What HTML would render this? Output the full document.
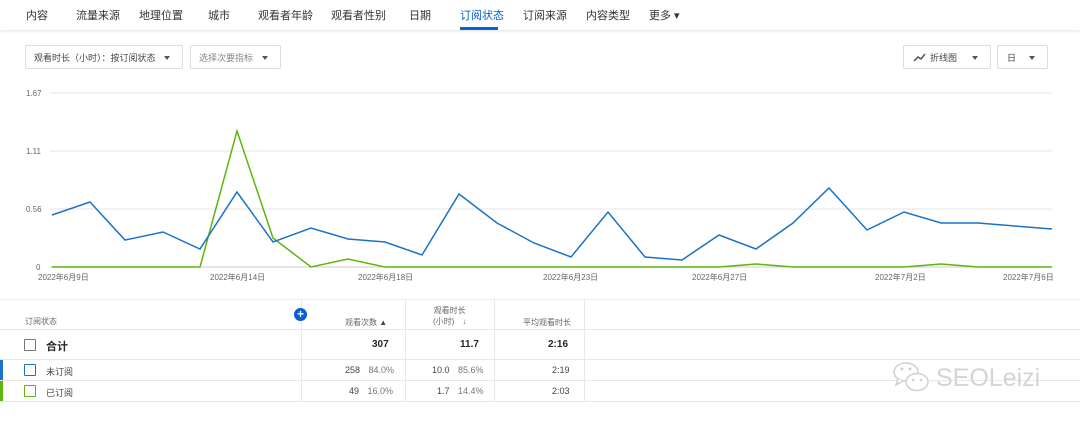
<!DOCTYPE html>
<html><head><meta charset="utf-8"><style>
body{margin:0;width:1080px;height:424px;background:#fff;font-family:"Liberation Sans","Noto Sans CJK SC",sans-serif;position:relative;overflow:hidden;color:#282828}
.nav{position:absolute;top:0;left:0;width:1080px;height:30px;box-shadow:0 1px 3px rgba(0,0,0,.12);background:#fff}
.nav span{position:absolute;top:7px;font-size:11px;color:#333}
.nav .act{color:#065fd4}
.nav .bar{position:absolute;left:460px;top:27px;width:38px;height:3px;background:#065fd4}
.dd{position:absolute;border:1px solid #ddd;border-radius:2px;height:24px;font-size:9px;color:#444;line-height:24px;box-sizing:border-box}
.tri{position:absolute;top:10px;width:0;height:0;border-left:3.5px solid transparent;border-right:3.5px solid transparent;border-top:4px solid #555}
.t{position:absolute;font-size:8px;color:#666}
.row{position:absolute;left:0;width:1080px;border-top:1px solid #e8e8e8}
.cb{position:absolute;width:10px;height:10px;border:1.5px solid #777;border-radius:1px}
.v{position:absolute;font-size:9px;color:#444}
</style></head><body>
<div class="nav">
<span style="left:26px">内容</span><span style="left:76px">流量来源</span><span style="left:139px">地理位置</span><span style="left:208px">城市</span><span style="left:258px">观看者年龄</span><span style="left:331px">观看者性别</span><span style="left:409px">日期</span><span class="act" style="left:460px">订阅状态</span><span style="left:523px">订阅来源</span><span style="left:586px">内容类型</span><span style="left:649px">更多 ▾</span>
<div class="bar"></div></div>
<div class="dd" style="left:25px;top:45px;width:158px;padding-left:8px">观看时长（小时）：按订阅状态<div class="tri" style="left:138px"></div></div>
<div class="dd" style="left:190px;top:45px;width:91px;padding-left:8px;color:#888">选择次要指标<div class="tri" style="left:71px"></div></div>
<div class="dd" style="left:903px;top:45px;width:88px;padding-left:26px"><svg style="position:absolute;left:9px;top:7px" width="13" height="9"><path d="M1 8L5 4L8 6L12 1" stroke="#555" stroke-width="1.5" fill="none"/></svg>折线图<div class="tri" style="left:68px"></div></div>
<div class="dd" style="left:997px;top:45px;width:51px;padding-left:9px">日<div class="tri" style="left:31px"></div></div>
<svg style="position:absolute;left:0;top:0" width="1080" height="300">
<g stroke="#e6e6e6" stroke-width="1"><line x1="50" x2="1052" y1="93" y2="93"/><line x1="50" x2="1052" y1="151" y2="151"/><line x1="50" x2="1052" y1="209" y2="209"/><line x1="50" x2="1052" y1="267" y2="267" stroke="#ccc"/></g>
<g font-size="8" fill="#666" font-family="Liberation Sans,Noto Sans CJK SC,sans-serif"><text x="26" y="96">1.67</text><text x="26" y="154">1.11</text><text x="26" y="212">0.56</text><text x="36" y="270">0</text>
<text x="38" y="280">2022年6月9日</text><text x="210" y="280">2022年6月14日</text><text x="358" y="280">2022年6月18日</text><text x="543" y="280">2022年6月23日</text><text x="692" y="280">2022年6月27日</text><text x="875" y="280">2022年7月2日</text><text x="1003" y="280">2022年7月6日</text></g>
<polyline fill="none" stroke="#61b40c" stroke-width="1.5" points="52,267 200,267 237,131 273,238 311,267 348,259 385,267 719,267 756,264 793,267 904,267 941,264 978,267 1052,267"/>
<polyline fill="none" stroke="#1a73c8" stroke-width="1.5" points="52,215 90,202 125,240 163,232 200,249 237,192 273,242 311,228 348,239 385,242 422,255 459,194 497,223 534,243 571,257 608,212 645,257 682,260 719,235 756,249 793,223 829,188 867,230 904,212 941,223 978,223 1015,226 1052,229"/>
</svg>
<div class="row" style="top:299px;border-color:#f0f0f0"></div>
<div class="row" style="top:329px"></div>
<div class="row" style="top:359px"></div>
<div class="row" style="top:380px"></div>
<div class="row" style="top:401px"></div>
<div style="position:absolute;left:301px;top:299px;height:102px;border-left:1px solid #e8e8e8"></div>
<div style="position:absolute;left:405px;top:299px;height:102px;border-left:1px solid #e8e8e8"></div>
<div style="position:absolute;left:494px;top:299px;height:102px;border-left:1px solid #e8e8e8"></div>
<div style="position:absolute;left:584px;top:299px;height:102px;border-left:1px solid #e8e8e8"></div>
<div class="t" style="left:25px;top:316px">订阅状态</div>
<div style="position:absolute;left:294px;top:308px;width:13px;height:13px;border-radius:50%;background:#065fd4;color:#fff;font-size:12px;line-height:12px;text-align:center;font-weight:bold">+</div>
<div class="t" style="left:345px;top:317px">观看次数 <span style="color:#444">▲</span></div>
<div class="t" style="left:433px;top:305px;text-align:center;line-height:11px">观看时长<br>(小时)　↓</div>
<div class="t" style="left:523px;top:317px">平均观看时长</div>
<div class="cb" style="left:24px;top:339px"></div>
<div style="position:absolute;left:46px;top:338px;font-size:11px;font-weight:bold">合计</div>
<div style="position:absolute;left:372px;top:339px;font-size:10px;font-weight:bold">307</div>
<div style="position:absolute;left:460px;top:339px;font-size:10px;font-weight:bold">11.7</div>
<div style="position:absolute;left:548px;top:339px;font-size:10px;font-weight:bold">2:16</div>
<div style="position:absolute;left:0;top:360px;width:3px;height:20px;background:#1a73c8"></div>
<div style="position:absolute;left:0;top:381px;width:3px;height:20px;background:#61b40c"></div>
<div class="cb" style="left:24px;top:364px;border-color:#1a73c8"></div>
<div class="cb" style="left:24px;top:385px;border-color:#61b40c"></div>
<div class="v" style="left:46px;top:365px">未订阅</div><div class="v" style="left:46px;top:386px">已订阅</div>
<div class="v" style="left:345px;top:365px">258 <span style="color:#777;margin-left:6px">84.0%</span></div>
<div class="v" style="left:349px;top:386px">49 <span style="color:#777;margin-left:6px">16.0%</span></div>
<div class="v" style="left:432px;top:365px">10.0 <span style="color:#777;margin-left:6px">85.6%</span></div>
<div class="v" style="left:437px;top:386px">1.7 <span style="color:#777;margin-left:6px">14.4%</span></div>
<div class="v" style="left:552px;top:365px">2:19</div><div class="v" style="left:552px;top:386px">2:03</div>
<div style="position:absolute;left:936px;top:363px;font-size:25px;color:#d4d4d4;line-height:30px">SEOLeizi</div>
<svg style="position:absolute;left:892px;top:361px" width="42" height="34"><ellipse cx="14" cy="11" rx="12" ry="9" fill="#fff" stroke="#d0d0d0" stroke-width="1.5"/><path d="M6 18L4 24L11 20" fill="#fff" stroke="#d0d0d0" stroke-width="1.5"/><ellipse cx="25" cy="21" rx="11" ry="8.5" fill="#fff" stroke="#d0d0d0" stroke-width="1.5"/><circle cx="10" cy="8" r="1.5" fill="#d0d0d0"/><circle cx="18" cy="8" r="1.5" fill="#d0d0d0"/><circle cx="21" cy="19" r="1.3" fill="#d0d0d0"/><circle cx="29" cy="19" r="1.3" fill="#d0d0d0"/></svg>
</body></html>
